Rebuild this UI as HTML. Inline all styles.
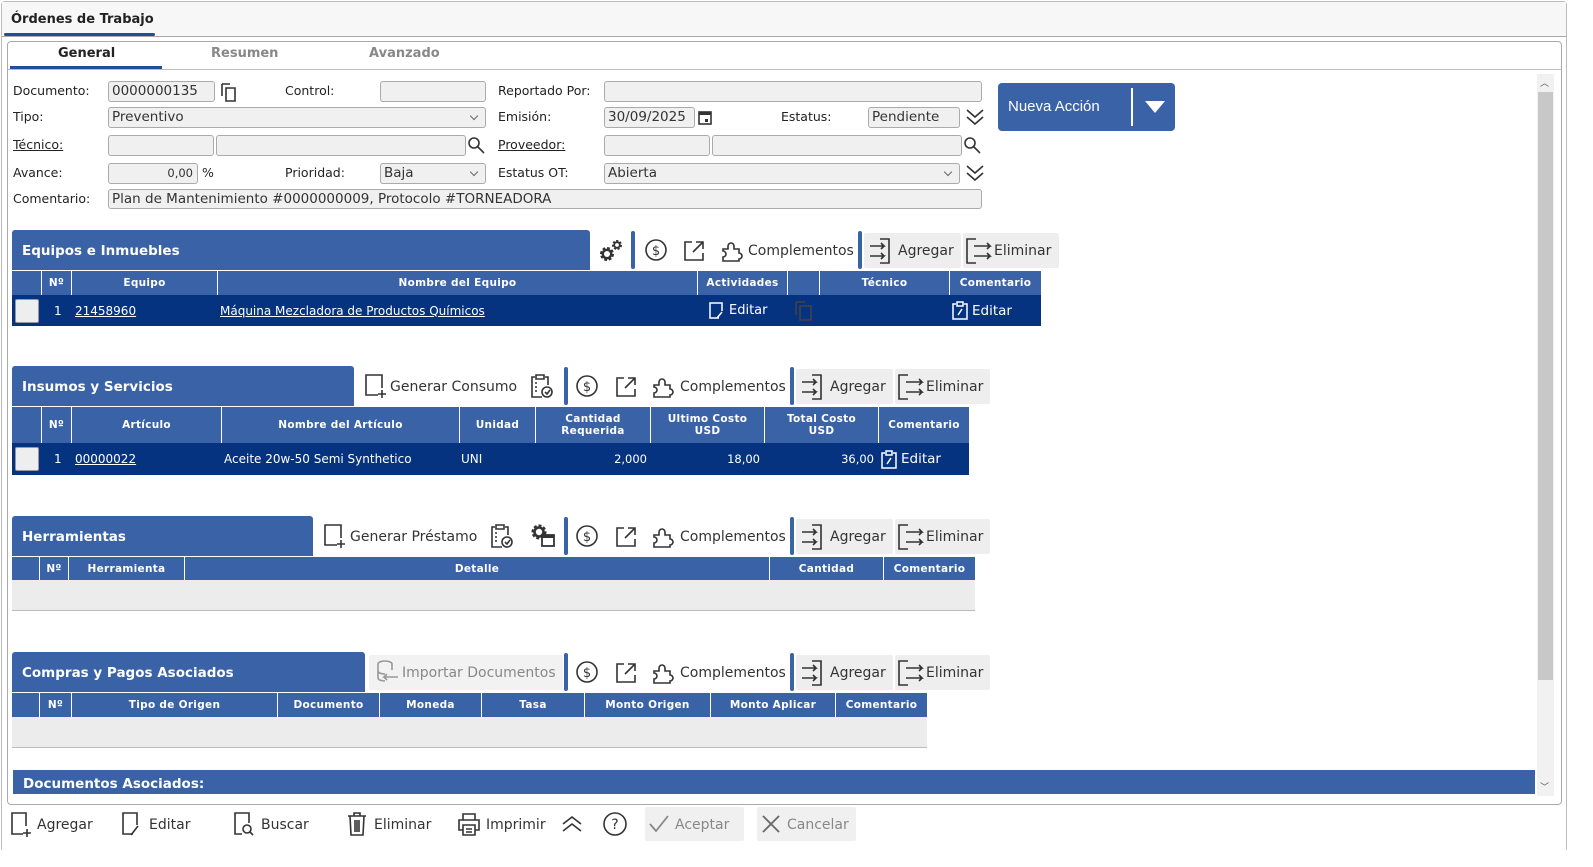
<!DOCTYPE html>
<html><head><meta charset="utf-8"><style>
*{box-sizing:border-box;margin:0;padding:0}
body{width:1593px;height:867px;background:#fff;position:relative;overflow:hidden;font-family:"DejaVu Sans","Liberation Sans",sans-serif;color:#222}
.a{position:absolute}
.lbl{position:absolute;font-size:12.5px;color:#222;line-height:16px}
.u{text-decoration:underline}
.in{position:absolute;height:21px;background:#f0f0f0;border:1px solid #aaa;border-radius:3px;font-size:13.5px;line-height:19px;padding-left:3px;color:#333;white-space:nowrap;overflow:hidden}
.dd::after{content:"";position:absolute;right:8px;top:5px;width:5px;height:5px;border-right:1px solid #666;border-bottom:1px solid #666;transform:rotate(45deg)}
.sh{position:absolute;background:#3a62a7;color:#fff;font-weight:bold;font-size:13.5px;padding-left:10px;border-radius:3px 3px 0 0}
.th{position:absolute;background:#3a62a7;color:#fff;font-weight:bold;font-size:10.5px;display:flex}
.th div{border-right:1px solid #fff;display:flex;align-items:center;justify-content:center;text-align:center;line-height:12px;letter-spacing:.3px}
.tr{position:absolute;background:#06337f;color:#fff;font-size:12px;display:flex;align-items:center}
.tr>div{white-space:nowrap}
.cb{width:24px;height:24px;background:#eee;border:1px solid #999;border-radius:2px;margin-left:3px}
.sep{position:absolute;width:4px;background:#3a62a7;border-radius:2px}
.tb{position:absolute;font-size:14px;color:#333;line-height:20px;white-space:nowrap}
.btn{position:absolute;background:#eee;border-radius:2px}
svg{position:absolute;overflow:visible}
.ic{fill:none;stroke:#333;stroke-width:1.6}
</style></head><body>
<div class="a" style="left:1px;top:1px;width:1566px;height:851px;border:1px solid #bbb;border-radius:4px;background:#fff"></div>
<div class="a" style="left:2px;top:2px;width:1564px;height:35px;background:#f7f7f7;border-bottom:1px solid #aaa"></div>
<div class="a" style="left:11px;top:12px;font-size:13px;font-weight:bold;color:#222">Órdenes de Trabajo</div>
<div class="a" style="left:4px;top:33px;width:151px;height:3px;background:#1f4f99;border-radius:2px"></div>
<div class="a" style="left:7px;top:41px;width:1555px;height:764px;border:1px solid #aaa;border-radius:4px"></div>
<div class="a" style="left:8px;top:69px;width:1553px;height:1px;background:#bbb"></div>
<div class="a" style="left:58px;top:46px;font-size:13px;font-weight:bold;color:#222">General</div>
<div class="a" style="left:211px;top:46px;font-size:13px;font-weight:bold;color:#888">Resumen</div>
<div class="a" style="left:369px;top:46px;font-size:13px;font-weight:bold;color:#888">Avanzado</div>
<div class="a" style="left:10px;top:66px;width:152px;height:3px;background:#1f4f99"></div>
<div class="a" style="left:1537px;top:74px;width:17px;height:722px;background:#f1f1f1"></div>
<div class="a" style="left:1538px;top:92px;width:15px;height:588px;background:#c8c8c8"></div>
<div class="a" style="left:1540px;top:76px;font-size:9px;color:#555">︿</div>
<div class="a" style="left:1540px;top:780px;font-size:9px;color:#555">﹀</div>

<div class="lbl" style="left:13px;top:83px">Documento:</div>
<div class="in" style="left:108px;top:81px;width:107px">0000000135</div>
<svg style="left:220px;top:82px" width="18" height="20"><path class="ic" stroke-width="2" d="M2 2v12M2 2h8M6 6h9v13H6z"/></svg>
<div class="lbl" style="left:285px;top:83px">Control:</div>
<div class="in" style="left:380px;top:81px;width:106px"></div>
<div class="lbl" style="left:498px;top:83px">Reportado Por:</div>
<div class="in" style="left:604px;top:81px;width:378px"></div>

<div class="lbl" style="left:13px;top:109px">Tipo:</div>
<div class="in dd" style="left:108px;top:107px;width:378px">Preventivo</div>
<div class="lbl" style="left:498px;top:109px">Emisión:</div>
<div class="in" style="left:604px;top:107px;width:91px">30/09/2025</div>
<svg style="left:698px;top:110px" width="14" height="15"><rect x="1" y="2" width="12" height="12" fill="none" stroke="#333" stroke-width="1.6"/><rect x="1" y="2" width="12" height="3" fill="#333"/><rect x="7" y="9" width="3" height="3" fill="#333"/></svg>
<div class="lbl" style="left:781px;top:109px">Estatus:</div>
<div class="in" style="left:868px;top:107px;width:92px">Pendiente</div>
<svg style="left:965px;top:108px" width="20" height="18"><path class="ic" stroke-width="2" d="M2 2l8 7 8-7M2 9l8 7 8-7"/></svg>

<div class="lbl u" style="left:13px;top:137px">Técnico:</div>
<div class="in" style="left:108px;top:135px;width:106px"></div>
<div class="in" style="left:216px;top:135px;width:250px"></div>
<svg style="left:467px;top:136px" width="18" height="18"><circle cx="7" cy="7" r="5" class="ic" stroke-width="2"/><path class="ic" stroke-width="2.4" d="M11 11l6 6"/></svg>
<div class="lbl u" style="left:498px;top:137px">Proveedor:</div>
<div class="in" style="left:604px;top:135px;width:106px"></div>
<div class="in" style="left:712px;top:135px;width:250px"></div>
<svg style="left:963px;top:136px" width="18" height="18"><circle cx="7" cy="7" r="5" class="ic" stroke-width="2"/><path class="ic" stroke-width="2.4" d="M11 11l6 6"/></svg>

<div class="lbl" style="left:13px;top:165px">Avance:</div>
<div class="in" style="left:108px;top:163px;width:90px;text-align:right;padding-right:4px;font-size:11.5px">0,00</div>
<div class="lbl" style="left:202px;top:165px">%</div>
<div class="lbl" style="left:285px;top:165px">Prioridad:</div>
<div class="in dd" style="left:380px;top:163px;width:106px">Baja</div>
<div class="lbl" style="left:498px;top:165px">Estatus OT:</div>
<div class="in dd" style="left:604px;top:163px;width:356px">Abierta</div>
<svg style="left:965px;top:164px" width="20" height="18"><path class="ic" stroke-width="2" d="M2 2l8 7 8-7M2 9l8 7 8-7"/></svg>

<div class="lbl" style="left:13px;top:191px">Comentario:</div>
<div class="in" style="left:108px;top:189px;width:874px;height:20px;line-height:18px">Plan de Mantenimiento #0000000009, Protocolo #TORNEADORA</div>

<div class="a" style="left:998px;top:83px;width:177px;height:48px;background:#3a62a7;border-radius:4px"></div>
<div class="a" style="left:1008px;top:98px;color:#fff;font-size:15px;font-family:'Liberation Sans',sans-serif">Nueva Acción</div>
<div class="a" style="left:1131px;top:88px;width:2px;height:38px;background:#fff"></div>
<svg style="left:1145px;top:101px" width="20" height="12"><path d="M0 0h20L10 12z" fill="#fff"/></svg>

<!-- Equipos -->
<div class="sh" style="left:12px;top:230px;width:578px;height:40px;line-height:42px">Equipos e Inmuebles</div>
<svg style="left:599px;top:238px" width="26" height="26"><circle cx="8" cy="16" r="5.5" fill="none" stroke="#333" stroke-width="3" stroke-dasharray="2.6 1.7"/><circle cx="8" cy="16" r="4.2" fill="none" stroke="#333" stroke-width="2.4"/><circle cx="18" cy="7" r="3.8" fill="none" stroke="#333" stroke-width="2.4" stroke-dasharray="2 1.4"/><circle cx="18" cy="7" r="2.8" fill="none" stroke="#333" stroke-width="1.8"/></svg>
<div class="sep" style="left:631px;top:231px;height:38px"></div>
<svg style="left:645px;top:239px" width="22" height="22"><circle cx="11" cy="11" r="10" class="ic" stroke-width="1.8"/><text x="11" y="16" font-size="13" text-anchor="middle" fill="#333" font-family="DejaVu Sans">$</text></svg>
<svg style="left:683px;top:240px" width="22" height="22"><path class="ic" stroke-width="1.8" d="M9 2H2v18h18v-7M13 2h7v7M20 2L10 12"/></svg>
<svg style="left:721px;top:239px" width="24" height="24"><path class="ic" d="M2 10h5v-3a3 3 0 0 1 6 0v3h5v4a3 3 0 0 1 0 6v2H2v-4a3 3 0 0 0 0-6z"/></svg>
<div class="tb" style="left:748px;top:241px">Complementos</div>
<div class="sep" style="left:858px;top:231px;height:38px"></div>
<div class="btn" style="left:864px;top:233px;width:97px;height:35px"></div>
<svg style="left:868px;top:238px" width="24" height="26"><path class="ic" stroke-width="1.8" d="M12 1h9v24h-9M2 8h14l-3-3M2 18h14l-3 3M16 8l-3 3M16 18l-3-3"/></svg>
<div class="tb" style="left:898px;top:241px">Agregar</div>
<div class="btn" style="left:963px;top:233px;width:96px;height:35px"></div>
<svg style="left:966px;top:238px" width="26" height="26"><path class="ic" stroke-width="1.8" d="M10 1H1v24h9M8 8h16l-3-3M24 8l-3 3M8 18h16l-3-3M24 18l-3 3"/></svg>
<div class="tb" style="left:994px;top:241px">Eliminar</div>

<div class="th" style="left:12px;top:271px;width:1029px;height:24px">
<div style="width:30px"></div><div style="width:30px">Nº</div><div style="width:146px">Equipo</div><div style="width:480px">Nombre del Equipo</div><div style="width:90px">Actividades</div><div style="width:32px"></div><div style="width:130px">Técnico</div><div style="width:91px;border:none">Comentario</div></div>
<div class="tr" style="left:12px;top:295px;width:1029px;height:31px">
<div class="cb"></div><div style="position:absolute;left:42px">1</div><div class="u" style="position:absolute;left:63px">21458960</div><div class="u" style="position:absolute;left:208px">Máquina Mezcladora de Productos Químicos</div>
<svg style="left:697px;top:7px" width="16" height="18"><path fill="none" stroke="#fff" stroke-width="1.5" d="M10 16H1V1h12v8M8 16l5-6"/></svg>
<div style="position:absolute;left:717px;font-size:13px">Editar</div>
<svg style="left:783px;top:6px" width="18" height="20"><path fill="none" stroke="#444" stroke-width="1.5" d="M1 1v13M1 1h9M5 5h11v14H5z"/></svg>
<svg style="left:940px;top:6px" width="16" height="19"><path fill="none" stroke="#fff" stroke-width="1.5" d="M4 3H1v15h14V3h-3M5 1h6v4H5zM6 14l4-6"/></svg>
<div style="position:absolute;left:960px;font-size:13.5px">Editar</div>
</div>

<!-- Insumos -->
<div class="sh" style="left:12px;top:366px;width:342px;height:40px;line-height:42px">Insumos y Servicios</div>
<svg style="left:364px;top:374px" width="24" height="26"><path class="ic" stroke-width="1.8" d="M14 21H2V1h16v13M14 20h8M18 16v8"/></svg>
<div class="tb" style="left:390px;top:377px">Generar Consumo</div>
<svg style="left:530px;top:373px" width="24" height="26"><path class="ic" stroke-width="1.5" d="M5 4H2v20h10M15 4h3v8M6 2h8v4H6zM5 10h2M5 14h2M5 18h2"/><circle cx="17" cy="19" r="5" class="ic" stroke-width="1.5"/><path class="ic" stroke-width="1.5" d="M15 19l2 2 3-4"/></svg>
<div class="sep" style="left:564px;top:367px;height:38px"></div>
<svg style="left:576px;top:375px" width="22" height="22"><circle cx="11" cy="11" r="10" class="ic" stroke-width="1.8"/><text x="11" y="16" font-size="13" text-anchor="middle" fill="#333" font-family="DejaVu Sans">$</text></svg>
<svg style="left:615px;top:376px" width="22" height="22"><path class="ic" stroke-width="1.8" d="M9 2H2v18h18v-7M13 2h7v7M20 2L10 12"/></svg>
<svg style="left:652px;top:375px" width="24" height="24"><path class="ic" d="M2 10h5v-3a3 3 0 0 1 6 0v3h5v4a3 3 0 0 1 0 6v2H2v-4a3 3 0 0 0 0-6z"/></svg>
<div class="tb" style="left:680px;top:377px">Complementos</div>
<div class="sep" style="left:790px;top:367px;height:38px"></div>
<div class="btn" style="left:796px;top:369px;width:97px;height:35px"></div>
<svg style="left:800px;top:374px" width="24" height="26"><path class="ic" stroke-width="1.8" d="M12 1h9v24h-9M2 8h14l-3-3M2 18h14l-3 3M16 8l-3 3M16 18l-3-3"/></svg>
<div class="tb" style="left:830px;top:377px">Agregar</div>
<div class="btn" style="left:895px;top:369px;width:95px;height:35px"></div>
<svg style="left:898px;top:374px" width="26" height="26"><path class="ic" stroke-width="1.8" d="M10 1H1v24h9M8 8h16l-3-3M24 8l-3 3M8 18h16l-3-3M24 18l-3 3"/></svg>
<div class="tb" style="left:926px;top:377px">Eliminar</div>

<div class="th" style="left:12px;top:407px;width:957px;height:36px">
<div style="width:30px"></div><div style="width:30px">Nº</div><div style="width:150px">Artículo</div><div style="width:238px">Nombre del Artículo</div><div style="width:76px">Unidad</div><div style="width:115px">Cantidad<br>Requerida</div><div style="width:114px">Ultimo Costo<br>USD</div><div style="width:114px">Total Costo<br>USD</div><div style="width:90px;border:none">Comentario</div></div>
<div class="tr" style="left:12px;top:443px;width:957px;height:32px">
<div class="cb"></div><div style="position:absolute;left:42px">1</div><div class="u" style="position:absolute;left:63px">00000022</div><div style="position:absolute;left:212px">Aceite 20w-50 Semi Synthetico</div><div style="position:absolute;left:449px">UNI</div>
<div style="position:absolute;right:322px;font-size:11.5px">2,000</div><div style="position:absolute;right:209px;font-size:11.5px">18,00</div><div style="position:absolute;right:95px;font-size:11.5px">36,00</div>
<svg style="left:869px;top:7px" width="16" height="19"><path fill="none" stroke="#fff" stroke-width="1.5" d="M4 3H1v15h14V3h-3M5 1h6v4H5zM6 14l4-6"/></svg>
<div style="position:absolute;left:889px;font-size:13.5px">Editar</div>
</div>

<!-- Herramientas -->
<div class="sh" style="left:12px;top:516px;width:301px;height:40px;line-height:42px">Herramientas</div>
<svg style="left:323px;top:524px" width="24" height="26"><path class="ic" stroke-width="1.8" d="M14 21H2V1h16v13M14 20h8M18 16v8"/></svg>
<div class="tb" style="left:350px;top:527px">Generar Préstamo</div>
<svg style="left:490px;top:523px" width="24" height="26"><path class="ic" stroke-width="1.5" d="M5 4H2v20h10M15 4h3v8M6 2h8v4H6zM5 10h2M5 14h2M5 18h2"/><circle cx="17" cy="19" r="5" class="ic" stroke-width="1.5"/><path class="ic" stroke-width="1.5" d="M15 19l2 2 3-4"/></svg>
<svg style="left:530px;top:523px" width="26" height="26"><circle cx="9" cy="9" r="6" fill="none" stroke="#333" stroke-width="3" stroke-dasharray="2.8 1.8"/><circle cx="9" cy="9" r="4.5" fill="none" stroke="#333" stroke-width="2.6"/><rect x="12" y="12" width="12" height="11" fill="#fff" stroke="#333" stroke-width="1.8"/><rect x="12" y="12" width="12" height="3" fill="#333"/></svg>
<div class="sep" style="left:564px;top:517px;height:38px"></div>
<svg style="left:576px;top:525px" width="22" height="22"><circle cx="11" cy="11" r="10" class="ic" stroke-width="1.8"/><text x="11" y="16" font-size="13" text-anchor="middle" fill="#333" font-family="DejaVu Sans">$</text></svg>
<svg style="left:615px;top:526px" width="22" height="22"><path class="ic" stroke-width="1.8" d="M9 2H2v18h18v-7M13 2h7v7M20 2L10 12"/></svg>
<svg style="left:652px;top:525px" width="24" height="24"><path class="ic" d="M2 10h5v-3a3 3 0 0 1 6 0v3h5v4a3 3 0 0 1 0 6v2H2v-4a3 3 0 0 0 0-6z"/></svg>
<div class="tb" style="left:680px;top:527px">Complementos</div>
<div class="sep" style="left:790px;top:517px;height:38px"></div>
<div class="btn" style="left:796px;top:519px;width:97px;height:35px"></div>
<svg style="left:800px;top:524px" width="24" height="26"><path class="ic" stroke-width="1.8" d="M12 1h9v24h-9M2 8h14l-3-3M2 18h14l-3 3M16 8l-3 3M16 18l-3-3"/></svg>
<div class="tb" style="left:830px;top:527px">Agregar</div>
<div class="btn" style="left:895px;top:519px;width:95px;height:35px"></div>
<svg style="left:898px;top:524px" width="26" height="26"><path class="ic" stroke-width="1.8" d="M10 1H1v24h9M8 8h16l-3-3M24 8l-3 3M8 18h16l-3-3M24 18l-3 3"/></svg>
<div class="tb" style="left:926px;top:527px">Eliminar</div>

<div class="th" style="left:12px;top:557px;width:963px;height:23px">
<div style="width:28px"></div><div style="width:29px">Nº</div><div style="width:116px">Herramienta</div><div style="width:585px">Detalle</div><div style="width:114px">Cantidad</div><div style="width:91px;border:none">Comentario</div></div>
<div class="a" style="left:12px;top:580px;width:963px;height:31px;background:#ececec;border-bottom:1px solid #bbb"></div>

<!-- Compras -->
<div class="sh" style="left:12px;top:652px;width:353px;height:40px;line-height:42px">Compras y Pagos Asociados</div>
<div class="btn" style="left:369px;top:655px;width:194px;height:35px;background:#f2f2f2"></div>
<svg style="left:376px;top:660px" width="24" height="26"><path fill="none" stroke="#999" stroke-width="1.6" d="M2 4a7 3 0 0 1 14 0v6M2 4v14a7 3 0 0 0 7 3M2 11a7 3 0 0 0 7 3M22 17H8l3-3M8 17l3 3"/></svg>
<div class="tb" style="left:402px;top:663px;color:#888">Importar Documentos</div>
<div class="sep" style="left:564px;top:653px;height:38px"></div>
<svg style="left:576px;top:661px" width="22" height="22"><circle cx="11" cy="11" r="10" class="ic" stroke-width="1.8"/><text x="11" y="16" font-size="13" text-anchor="middle" fill="#333" font-family="DejaVu Sans">$</text></svg>
<svg style="left:615px;top:662px" width="22" height="22"><path class="ic" stroke-width="1.8" d="M9 2H2v18h18v-7M13 2h7v7M20 2L10 12"/></svg>
<svg style="left:652px;top:661px" width="24" height="24"><path class="ic" d="M2 10h5v-3a3 3 0 0 1 6 0v3h5v4a3 3 0 0 1 0 6v2H2v-4a3 3 0 0 0 0-6z"/></svg>
<div class="tb" style="left:680px;top:663px">Complementos</div>
<div class="sep" style="left:790px;top:653px;height:38px"></div>
<div class="btn" style="left:796px;top:655px;width:97px;height:35px"></div>
<svg style="left:800px;top:660px" width="24" height="26"><path class="ic" stroke-width="1.8" d="M12 1h9v24h-9M2 8h14l-3-3M2 18h14l-3 3M16 8l-3 3M16 18l-3-3"/></svg>
<div class="tb" style="left:830px;top:663px">Agregar</div>
<div class="btn" style="left:895px;top:655px;width:95px;height:35px"></div>
<svg style="left:898px;top:660px" width="26" height="26"><path class="ic" stroke-width="1.8" d="M10 1H1v24h9M8 8h16l-3-3M24 8l-3 3M8 18h16l-3-3M24 18l-3 3"/></svg>
<div class="tb" style="left:926px;top:663px">Eliminar</div>

<div class="th" style="left:12px;top:693px;width:915px;height:24px">
<div style="width:28px"></div><div style="width:32px">Nº</div><div style="width:206px">Tipo de Origen</div><div style="width:102px">Documento</div><div style="width:102px">Moneda</div><div style="width:103px">Tasa</div><div style="width:126px">Monto Origen</div><div style="width:125px">Monto Aplicar</div><div style="width:91px;border:none">Comentario</div></div>
<div class="a" style="left:12px;top:717px;width:915px;height:31px;background:#ececec;border-bottom:1px solid #bbb"></div>

<div class="a" style="left:13px;top:770px;width:1522px;height:24px;background:#3a62a7;color:#fff;font-weight:bold;font-size:13.5px;line-height:28px;padding-left:10px">Documentos Asociados:</div>

<div class="a" style="left:2px;top:806px;width:1564px;height:46px;background:#fff"></div>
<svg style="left:11px;top:812px" width="22" height="26"><path class="ic" stroke-width="1.8" d="M12 22H1V1h14v13M12 21h8M16 17v8"/></svg>
<div class="tb" style="left:37px;top:815px">Agregar</div>
<svg style="left:122px;top:812px" width="22" height="26"><path class="ic" stroke-width="1.8" d="M11 22H1V1h14v12M9 23l7-9"/></svg>
<div class="tb" style="left:149px;top:815px">Editar</div>
<svg style="left:234px;top:812px" width="24" height="26"><path class="ic" stroke-width="1.8" d="M8 22H1V1h14v10"/><circle cx="13" cy="17" r="4" class="ic" stroke-width="1.8"/><path class="ic" stroke-width="2" d="M16 20l3 3"/></svg>
<div class="tb" style="left:261px;top:815px">Buscar</div>
<svg style="left:347px;top:812px" width="22" height="24"><path class="ic" stroke-width="1.8" d="M1 4h18M7 4V1h6v3M3 4l1 19h12l1-19M8 8v12M10 8v12M12 8v12"/></svg>
<div class="tb" style="left:374px;top:815px">Eliminar</div>
<svg style="left:458px;top:813px" width="24" height="24"><path class="ic" stroke-width="1.8" d="M5 7V1h12v6M5 17H1V7h20v10h-4M5 12h12v10H5zM8 16h6M8 19h6"/></svg>
<div class="tb" style="left:486px;top:815px">Imprimir</div>
<svg style="left:561px;top:815px" width="22" height="18"><path class="ic" stroke-width="2.2" d="M2 9l9-7 9 7M2 16l9-7 9 7"/></svg>
<svg style="left:603px;top:812px" width="24" height="24"><circle cx="12" cy="12" r="11" class="ic" stroke-width="2"/><text x="12" y="17" font-size="14" text-anchor="middle" fill="#333" font-family="DejaVu Sans">?</text></svg>
<div class="btn" style="left:645px;top:807px;width:99px;height:34px;background:#f0f0f0"></div>
<svg style="left:649px;top:815px" width="20" height="18"><path fill="none" stroke="#888" stroke-width="1.8" d="M1 9l6 7L19 1"/></svg>
<div class="tb" style="left:675px;top:815px;color:#888">Aceptar</div>
<div class="btn" style="left:757px;top:807px;width:99px;height:34px;background:#f0f0f0"></div>
<svg style="left:762px;top:815px" width="18" height="18"><path fill="none" stroke="#666" stroke-width="1.8" d="M1 1l16 16M17 1L1 17"/></svg>
<div class="tb" style="left:787px;top:815px;color:#888">Cancelar</div>
</body></html>
